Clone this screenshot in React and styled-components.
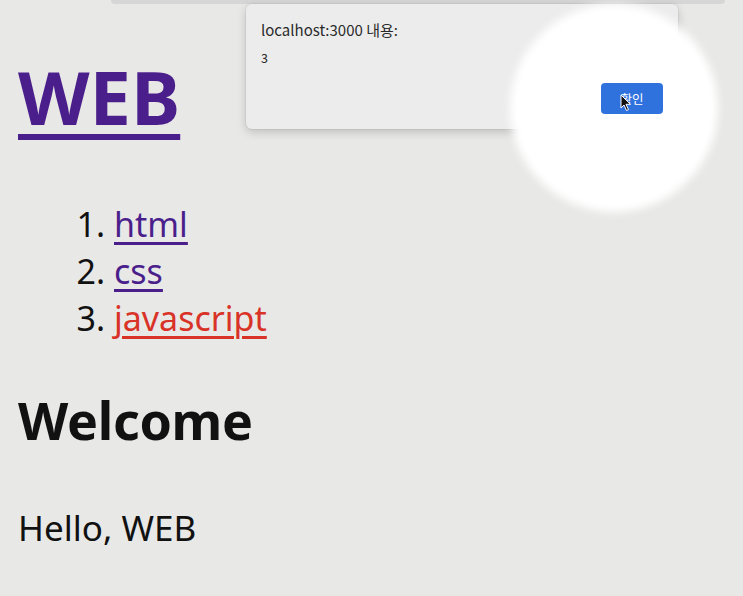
import React from 'react';
import styled, { createGlobalStyle } from 'styled-components';

const GlobalStyle = createGlobalStyle`
  html, body {
    margin: 0;
    padding: 0;
    background: #e8e8e7;
  }
  body {
    font-family: "Noto Sans", "Noto Sans CJK KR", sans-serif;
    color: #111;
  }
`;

const Screen = styled.div`
  position: relative;
  width: 743px;
  height: 596px;
  overflow: hidden;
  background: #e8e8e7;
`;

const TopStrip = styled.div`
  height: 4px;
  margin: 0 18px 0 111px;
  background: #d6d6d6;
  border-radius: 0 0 4px 4px;
`;

const Page = styled.main`
  display: flex;
  flex-direction: column;
  align-items: flex-start;
  padding-left: 18px;
`;

const Title = styled.h1`
  margin: 48px 0 0;
  font-size: 74px;
  line-height: 90px;
  font-weight: 700;

  a {
    color: #4b1f8b;
    text-decoration-thickness: 6px;
    text-underline-offset: 9px;
  }
`;

const Nav = styled.ol`
  margin: 59px 0 0;
  padding-left: 96px;
  font-size: 34px;
  line-height: 47px;
`;

const NavItem = styled.li`
  a {
    color: ${p => (p.$active ? '#d93226' : '#4b1f8b')};
    text-decoration-thickness: 3px;
    text-underline-offset: 5px;
  }
`;

const Heading = styled.h2`
  margin: 44px 0 0;
  font-size: 52px;
  line-height: 68px;
  font-weight: 700;
  letter-spacing: -0.3px;
`;

const Body = styled.p`
  margin: 51px 0 0;
  font-size: 35px;
  line-height: 46px;
`;

const Dialog = styled.div`
  position: absolute;
  left: 246px;
  top: 4px;
  width: 432px;
  height: 125px;
  box-sizing: border-box;
  padding: 16px 15px 0;
  background: #ececec;
  border-radius: 6px;
  box-shadow: 0 3px 10px rgba(0, 0, 0, 0.18), 0 0 0 1px rgba(0, 0, 0, 0.04);
  font-family: "Noto Sans CJK KR", "Noto Sans", sans-serif;
  color: #2a2a2a;
`;

const DialogTitle = styled.div`
  font-size: 15px;
  line-height: 20px;
`;

const DialogMessage = styled.div`
  margin-top: 10px;
  font-size: 12.5px;
  line-height: 16px;
`;

const DialogActions = styled.div`
  display: flex;
  justify-content: flex-end;
  margin-top: 17px;
`;

const OkButton = styled.button`
  position: relative;
  z-index: 3;
  width: 62px;
  height: 31px;
  border: none;
  border-radius: 4px;
  background: #2f72de;
  color: #fff;
  font-family: "Noto Sans CJK KR", sans-serif;
  font-size: 12.5px;
  padding: 0;
`;

const Cursor = styled.svg`
  position: absolute;
  left: 19px;
  top: 11px;
  width: 12px;
  height: 18px;
`;

const ClickGlow = styled.div`
  position: absolute;
  z-index: 2;
  left: 510px;
  top: 4px;
  width: 208px;
  height: 208px;
  border-radius: 50%;
  background: radial-gradient(circle, #ffffff 0, #ffffff 76%, rgba(255, 255, 255, 0.7) 88%, rgba(255, 255, 255, 0) 100%);
  filter: blur(4px);
  pointer-events: none;
`;

const links = [
  { label: 'html' },
  { label: 'css' },
  { label: 'javascript', active: true },
];

export default function App() {
  return (
    <Screen>
      <GlobalStyle />
      <TopStrip />
      <Page>
        <Title>
          <a href="#/">WEB</a>
        </Title>
        <Nav>
          {links.map(l => (
            <NavItem key={l.label} $active={l.active}>
              <a href={`#/read/${l.label}`}>{l.label}</a>
            </NavItem>
          ))}
        </Nav>
        <Heading>Welcome</Heading>
        <Body>Hello, WEB</Body>
      </Page>
      <Dialog>
        <DialogTitle>localhost:3000 내용:</DialogTitle>
        <DialogMessage>3</DialogMessage>
        <DialogActions>
          <OkButton>
            확인
            <Cursor viewBox="0 0 12 18">
              <path d="M1 1 L1 14 L4 11 L6.5 16.5 L8.5 15.6 L6 10.3 L10.5 10.3 Z" fill="#111" stroke="#fff" strokeWidth="1" strokeLinejoin="round" />
            </Cursor>
          </OkButton>
        </DialogActions>
      </Dialog>
      <ClickGlow />
    </Screen>
  );
}
